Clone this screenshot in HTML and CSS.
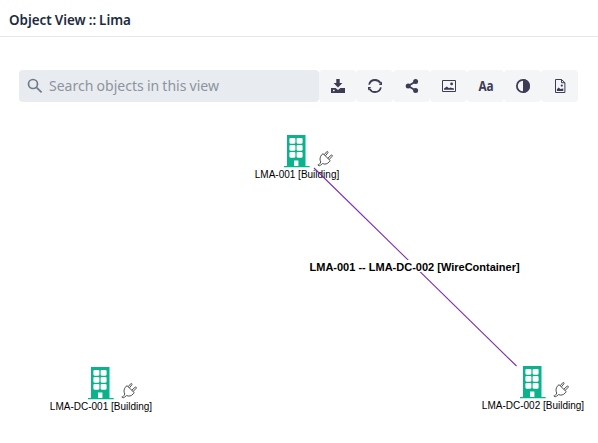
FILE: index.html
```
<!DOCTYPE html>
<html lang="en">
<head>
<meta charset="utf-8">
<title>Object View</title>
<link rel="stylesheet" href="styles.css">
</head>
<body>
<svg class="defs" aria-hidden="true">
  <symbol id="building" viewBox="0 0 26 33">
    <path class="b-body" d="M3 0H21.5V31H25.7V32.3H0V31H3Z"/>
    <g class="b-window">
      <rect x="5.4" y="3" width="6" height="5.7" rx="1.1"/><rect x="12.6" y="3" width="6" height="5.7" rx="1.1"/>
      <rect x="5.4" y="10" width="6" height="5.7" rx="1.1"/><rect x="12.6" y="10" width="6" height="5.7" rx="1.1"/>
      <rect x="5.4" y="17" width="6" height="5.7" rx="1.1"/><rect x="12.6" y="17" width="6" height="5.7" rx="1.1"/>
      <path d="M10 31V25.5H14.4V31Z"/>
    </g>
  </symbol>
  <symbol id="plug" viewBox="0 0 18 18">
    <path class="p-line" d="M5.2 4.2L6.4 3.4 14 10.7 13 12C11 14.4 8.3 15 5.9 13.8L3.7 15.6C2.8 16.4 1.4 16.2.9 15.2 2.2 15.2 2.6 14.5 3.2 13.6L4 12.2C2.6 9.7 3 6.7 5.2 4.2ZM7.6 4.5L10.3 1.3C11.2.6 12.1 1.5 11.5 2.4L9 5.6M11.4 8.2L14.8 5.1C15.8 4.3 16.8 5.3 16 6.2L12.9 9.5"/>
  </symbol>
</svg>
<header class="header"><h1 class="title">Object View :: Lima</h1></header>
<main class="view">
  <div class="toolbar">
    <label class="search">
      <svg class="search-icon" viewBox="0 0 16 16"><circle cx="6" cy="6" r="4.5"/><path d="M9.4 9.4L14.6 14.4"/></svg>
      <span class="placeholder">Search objects in this view</span>
    </label>
    <div class="tool"><svg class="icon" viewBox="0 0 16 16"><path d="M6.3 1H9.7V5H12.4L8 9.6 3.6 5H6.3ZM1 10H5.6L8 12 10.4 10H15V15H1ZM3 11.7V13.3H4.6V11.7Z" fill-rule="evenodd"/></svg></div>
    <div class="tool"><svg class="icon" viewBox="0 0 16 16"><path class="stroke" d="M2.1 6.6C2.8 3.8 5 2 8 2 10.5 2 12.4 3.2 13.4 5.2M13.9 9.4C13.2 12.2 11 14 8 14 5.5 14 3.6 12.8 2.6 10.8"/><path d="M15 3.6V7H11.8ZM1 12.4V9H4.2Z"/></svg></div>
    <div class="tool"><svg class="icon" viewBox="0 0 16 16"><circle cx="11.6" cy="3.6" r="2.5"/><circle cx="4.2" cy="8" r="2.5"/><circle cx="11.6" cy="12.4" r="2.5"/><path class="stroke" d="M11.6 3.6L4.2 8 11.6 12.4"/></svg></div>
    <div class="tool"><svg class="icon" viewBox="0 0 16 16"><path class="thin" d="M1.5 2.5H14.5V13.5H1.5Z"/><circle cx="10.6" cy="5.9" r="1.4"/><path d="M3 11.8V10.6L5.8 8.6 8 10.2 9.2 9.6 13 10.4V11.8Z"/></svg></div>
    <div class="tool"><span class="letters">Aa</span></div>
    <div class="tool"><svg class="icon" viewBox="0 0 16 16"><circle class="stroke" cx="8" cy="8" r="6.1"/><path d="M8 1A7 7 0 0 1 8 15Z"/></svg></div>
    <div class="tool"><svg class="icon" viewBox="0 0 16 16"><path class="thin" d="M3.5 1.5H9.5L12.9 4.7V14.5H3.5ZM9.5 1.5V4.7H12.9"/><circle cx="9.8" cy="7.6" r="1.1"/><path d="M4.9 12.9V11.3L6.7 9.6 8.4 11 11.3 10.6V12.9Z"/></svg></div>
  </div>
  <div class="canvas">
    <div class="node n1"><svg class="building"><use href="#building"/></svg><svg class="plug"><use href="#plug"/></svg><span class="label">LMA-001 [Building]</span></div>
    <div class="node n2"><svg class="building"><use href="#building"/></svg><svg class="plug"><use href="#plug"/></svg><span class="label">LMA-DC-001 [Building]</span></div>
    <div class="node n3"><svg class="building"><use href="#building"/></svg><svg class="plug"><use href="#plug"/></svg><span class="label">LMA-DC-002 [Building]</span></div>
    <svg class="edges" viewBox="0 0 598 443"><path d="M314 168L516.5 366"/></svg>
    <span class="edge-label">LMA-001 -- LMA-DC-002 [WireContainer]</span>
  </div>
</main>
</body>
</html>
```
FILE: styles.css
```
* { box-sizing: border-box; }
body { margin: 0; height: 443px; overflow: hidden; background: #fff; font-family: "Noto Sans", sans-serif; }
.defs { position: absolute; width: 0; height: 0; }
.header { height: 37px; padding: 2px 9px 0; border-bottom: 1px solid #e4e8ed; display: flex; align-items: center; }
.title { margin: 0; font-size: 15px; line-height: 24px; font-weight: 600; word-spacing: -.6px; color: #1b2b41; white-space: nowrap; transform: scaleX(.895); transform-origin: left; }
.view { padding: 33px 19px 0; }
.toolbar { display: flex; height: 32px; }
.search { width: 300px; flex: none; background: #e8ebef; border-radius: 4px; display: flex; align-items: center; gap: 6px; padding-left: 8px; }
.search-icon { width: 16px; height: 16px; fill: none; stroke: #6f7b8b; stroke-width: 1.7; }
.placeholder { padding-bottom: 2px; font-size: 15px; line-height: 24px; word-spacing: -.5px; color: #8c949f; white-space: nowrap; transform: scaleX(.935); transform-origin: left; }
.tool { width: 37px; flex: none; background: #f3f5f7; border-radius: 4px; display: flex; align-items: center; justify-content: center; color: #3d3b56; }
.icon { width: 16px; height: 16px; fill: currentColor; }
.stroke { fill: none; stroke: currentColor; stroke-width: 1.8; }
.thin { fill: none; stroke: currentColor; stroke-width: 1; }
.letters { margin-left: 1px; font-size: 14px; line-height: 20px; font-weight: 700; transform: scaleX(.84); }
.canvas { font-family: "Liberation Sans", Arial, sans-serif; color: #000; }
.node { position: absolute; width: 110px; height: 50px; }
.n1 { left: 242px; top: 135px; }
.n2 { left: 46px; top: 367px; }
.n3 { left: 478px; top: 366px; }
.building { position: absolute; left: 42px; top: 0; width: 26px; height: 33px; }
.plug { position: absolute; left: 75px; top: 15px; width: 17px; height: 18px; }
.b-body { fill: #0bb38c; }
.b-window { fill: #fff; }
.p-line { fill: none; stroke: #444; stroke-width: 1; }
.label { position: absolute; left: 0; width: 110px; top: 33px; font-size: 10px; line-height: 13px; text-align: center; white-space: nowrap; }
.edges { position: absolute; left: 0; top: 0; width: 598px; height: 443px; fill: none; stroke: #7a28b0; stroke-width: 1.05; }
.edge-label { position: absolute; left: 309.5px; top: 260px; padding-top: 2px; font-size: 11px; line-height: 10px; font-weight: 700; color: #000; background: #fff; white-space: nowrap; }
```
